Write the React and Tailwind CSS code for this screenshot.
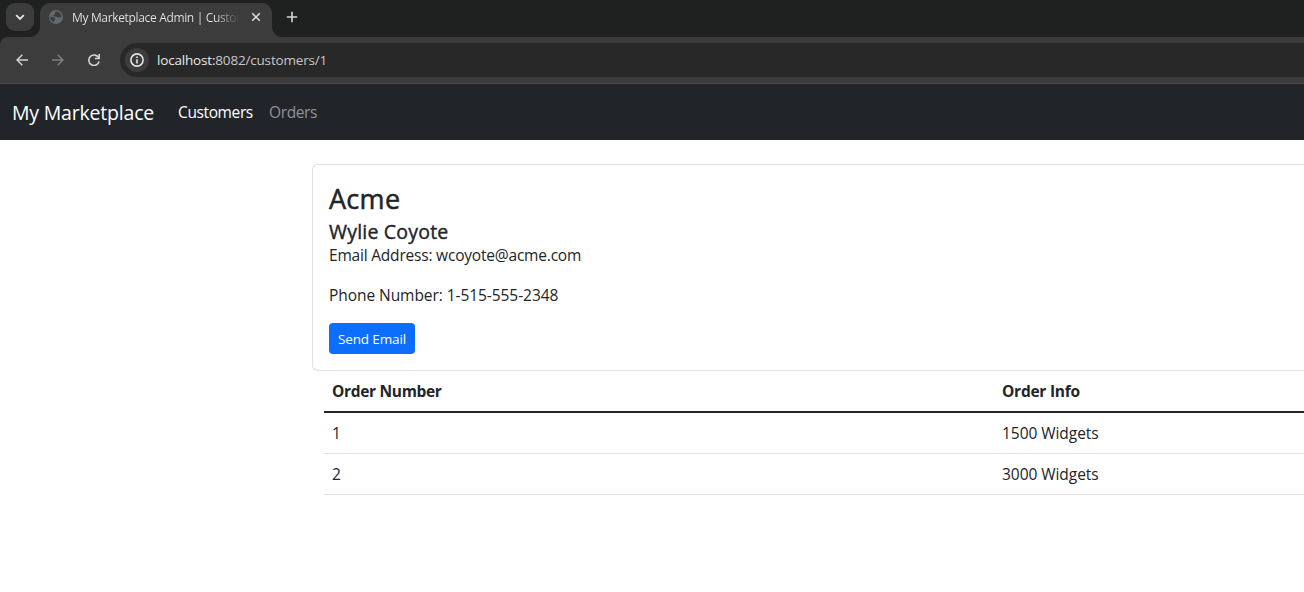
const orders = [
  { number: 1, info: "1500 Widgets" },
  { number: 2, info: "3000 Widgets" },
];

function TabStrip() {
  return (
    <div className="flex h-[37px] items-start bg-[#1f2120] pl-1.5 pt-[3px]">
      <button className="flex h-7 w-7 items-center justify-center rounded-[9px] bg-[#3c3c3c]" aria-label="Search tabs">
        <svg width="10" height="10" viewBox="0 0 10 10" fill="none" stroke="#e6e6e6" strokeWidth="1.8">
          <path d="M1.2 3.2 5 7l3.8-3.8" />
        </svg>
      </button>
      <svg className="-ml-1 self-end" width="10" height="10" viewBox="0 0 10 10">
        <path d="M10 0A10 10 0 0 1 0 10H10Z" fill="#3c3c3c" />
      </svg>
      <div className="flex h-[34px] w-[232px] items-center rounded-t-[10px] bg-[#3c3c3c] pb-[6px] pl-[9px] pr-[11px]">
        <svg width="14" height="14" viewBox="0 0 14 14">
          <circle cx="7" cy="7" r="7" fill="#656a70" />
          <path d="M7.800 1.400C6.200 1.700 5.600 2.600 5.900 3.500c.4.9-.3 1.300-1.300 1.500-.8.2-.7 1.100.1 1.400 1.200.4 2.700-.1 3.500.8.6.7 1.400.5 2 .1.8-.5 1.600-.2 2.300.2C12.700 4.500 10.700 1.900 7.800 1.400Z" fill="#3c3c3c" />
          <path d="M1.400 6.600c1.500.2 3.400.6 4.300 1.500.7.800.3 1.500-.2 2.100-.5.700-.3 1.400-.2 2.200C2.800 11.600 1.100 9.500 1.400 6.600Z" fill="#3c3c3c" />
        </svg>
        <div className="ml-[9px] mt-0.5 w-[168px] overflow-hidden whitespace-nowrap bg-linear-to-r from-[#e6e6e6] from-85% to-[#3c3c3c] bg-clip-text text-[12px] leading-4 tracking-[-0.340px] text-transparent">
          My Marketplace Admin | Customers
        </div>
        <svg className="ml-auto" width="10" height="10" viewBox="0 0 10 10" stroke="#e3e3e3" strokeWidth="1.500">
          <path d="m1.200 1.200 7.600 7.600M8.800 1.200 1.200 8.800" />
        </svg>
      </div>
      <svg className="self-end" width="10" height="10" viewBox="0 0 10 10">
        <path d="M0 0A10 10 0 0 0 10 10H0Z" fill="#3c3c3c" />
      </svg>
      <button className="ml-1 flex h-7 w-3 items-center justify-center" aria-label="New tab">
        <svg width="12" height="12" viewBox="0 0 12 12" stroke="#d6d6d6" strokeWidth="1.600">
          <path d="M6 .8v10.400M.8 6h10.400" />
        </svg>
      </button>
    </div>
  );
}

function AddressBar() {
  return (
    <div className="bg-[#1f2120]">
      <div className="flex h-[47px] items-center rounded-tl-[8px] border-b border-[#4a4a4a] bg-[#3c3c3c] pl-4">
        <svg width="12" height="12" viewBox="0 0 12 12" fill="none" stroke="#d2d2d2" strokeWidth="1.500">
          <path d="M12 6H1.200M6.300.7 1 6l5.300 5.300" />
        </svg>
        <svg className="ml-6" width="12" height="12" viewBox="0 0 12 12" fill="none" stroke="#7f7f7f" strokeWidth="1.500">
          <path d="M0 6h10.800M5.700.7 11 6l-5.300 5.300" />
        </svg>
        <svg className="ml-6" width="12" height="12" viewBox="0 0 12 12" fill="none" stroke="#d2d2d2" strokeWidth="1.600">
          <path d="M10.700 4A5.200 5.200 0 1 0 11.100 7.300" />
          <path d="M11.200 0v4.500H6.800" />
        </svg>
        <div className="ml-5 flex h-[34px] flex-1 items-center rounded-l-full bg-[#282828] pl-[5px]">
          <span className="flex h-6 w-6 items-center justify-center rounded-full bg-[#3c3c3c]">
            <svg width="14" height="14" viewBox="0 0 14 14" fill="none" stroke="#e3e3e3" strokeWidth="1.600">
              <circle cx="7" cy="7" r="6.100" />
              <path d="M7 6.200v4.200M7 3.500v1.600" />
            </svg>
          </span>
          <span className="ml-2 whitespace-nowrap text-[13.500px] tracking-[-0.180px] text-[#c7c7c7]">
            <span className="text-[#e8e8e8]">localhost:</span>8082/customers/1
          </span>
        </div>
      </div>
    </div>
  );
}

function Navbar() {
  return (
    <nav className="flex h-14 items-center bg-[#212529] px-3 pt-0.5 text-[15.500px] tracking-[-0.380px] text-white">
      <a className="w-[166px] whitespace-nowrap text-[19.500px] tracking-[-0.200px]">My Marketplace</a>
      <a className="w-[91px]">Customers</a>
      <a className="text-[#909294]">Orders</a>
    </nav>
  );
}

function CustomerCard() {
  return (
    <section className="h-[207px] rounded-l-[6px] border border-r-0 border-[#dedfe0] px-4 pt-4">
      <h2 className="mt-[1px] text-[27px] leading-[34px] tracking-[0.300px] [-webkit-text-stroke:0.5px_#212529]">Acme</h2>
      <h5 className="mt-1 text-[19.500px] leading-6 tracking-[0.200px] [-webkit-text-stroke:0.4px_#212529]">Wylie Coyote</h5>
      <p className="-mt-px leading-6 tracking-[-0.200px]">Email Address: wcoyote@acme.com</p>
      <p className="mt-4 leading-6 tracking-[-0.060px]">Phone Number: 1-515-555-2348</p>
      <button className="mt-4 flex h-[31px] w-[86px] items-center justify-center whitespace-nowrap rounded-[4px] bg-[#0d6efd] pt-0.5 text-[13.500px] tracking-[-0.150px] text-white">
        Send Email
      </button>
    </section>
  );
}

function OrdersTable() {
  return (
    <div className="pl-3">
      <table className="w-full table-fixed border-collapse text-left leading-6">
        <thead>
          <tr className="h-[41px] border-b-2 border-[#212529]">
            <th className="w-[670px] px-2 font-bold tracking-[-0.320px]">Order Number</th>
            <th className="px-2 font-bold tracking-[-0.250px]">Order Info</th>
          </tr>
        </thead>
        <tbody>
          {orders.map((order) => (
            <tr key={order.number} className="h-[41px] border-b border-[#dee2e6]">
              <td className="px-2">{order.number}</td>
              <td className="px-2 tracking-[-0.050px]">{order.info}</td>
            </tr>
          ))}
        </tbody>
      </table>
    </div>
  );
}

export default function App() {
  return (
    <div className="h-[592px] overflow-hidden bg-white font-['Open_Sans','Noto_Sans',sans-serif] text-[#212529]">
      <TabStrip />
      <AddressBar />
      <Navbar />
      <main className="pl-[312px] pt-6 text-[15.500px]">
        <CustomerCard />
        <OrdersTable />
      </main>
    </div>
  );
}
